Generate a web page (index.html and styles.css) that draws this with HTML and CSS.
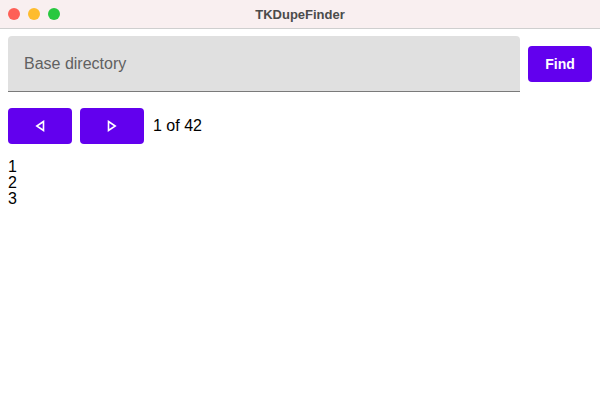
FILE: index.html
```html
<!DOCTYPE html>
<html>
<head>
<meta charset="utf-8">
<link rel="stylesheet" href="styles.css">
</head>
<body>
<div class="window">
  <div class="titlebar">
    <div class="lights">
      <span class="light red"></span>
      <span class="light yellow"></span>
      <span class="light green"></span>
    </div>
    <div class="title">TKDupeFinder</div>
  </div>
  <div class="content">
    <div class="search-row">
      <div class="field"><span class="placeholder">Base directory</span></div>
      <button class="btn find">Find</button>
    </div>
    <div class="nav-row">
      <button class="btn nav">
        <svg width="10" height="12" viewBox="0 0 10 12"><path d="M8.5 1.5 L1.8 6 L8.5 10.5 Z" fill="none" stroke="#fff" stroke-width="1.6" stroke-linejoin="miter"/></svg>
      </button>
      <button class="btn nav">
        <svg width="10" height="12" viewBox="0 0 10 12"><path d="M1.5 1.5 L8.2 6 L1.5 10.5 Z" fill="none" stroke="#fff" stroke-width="1.6" stroke-linejoin="miter"/></svg>
      </button>
      <span class="count">1 of 42</span>
    </div>
    <div class="list">
      <div>1</div>
      <div>2</div>
      <div>3</div>
    </div>
  </div>
</div>
</body>
</html>
```
FILE: styles.css
```css
html, body {
  margin: 0;
  padding: 0;
  background: #ffffff;
}
body {
  font-family: "Liberation Sans", Arial, sans-serif;
  color: #000;
  width: 600px;
  height: 400px;
  overflow: hidden;
}
.titlebar {
  height: 28px;
  background: #f9eff0;
  border-bottom: 1px solid #cfcfcf;
  display: flex;
  align-items: center;
  justify-content: center;
  position: relative;
}
.lights {
  position: absolute;
  left: 8px;
  top: 8px;
  display: flex;
  gap: 8px;
}
.light {
  width: 12px;
  height: 12px;
  border-radius: 50%;
  display: block;
}
.red { background: #fe5f57; }
.yellow { background: #febc2e; }
.green { background: #28c840; }
.title {
  font-size: 13px;
  font-weight: bold;
  color: #4b4b4b;
}
.content {
  padding: 7px 8px 0 8px;
}
.search-row {
  display: flex;
  align-items: center;
  gap: 8px;
}
.field {
  height: 55px;
  background: #e0e0e0;
  border-bottom: 1px solid #7a7a7a;
  border-radius: 4px 4px 0 0;
  display: flex;
  align-items: center;
  padding-left: 16px;
  box-sizing: content-box;
  width: 496px;
  flex: 0 0 496px;
}
.placeholder {
  font-size: 16px;
  color: #616161;
}
.btn {
  border: none;
  background: #6200ee;
  color: #fff;
  border-radius: 4px;
  width: 64px;
  height: 36px;
  padding: 0;
  display: flex;
  align-items: center;
  justify-content: center;
  font-family: "Liberation Sans", Arial, sans-serif;
}
.find {
  font-size: 14px;
  font-weight: bold;
}
.nav-row {
  margin-top: 16px;
  display: flex;
  align-items: center;
  gap: 8px;
}
.count {
  font-size: 16px;
  margin-left: 1px;
}
.list {
  margin-top: 15px;
  font-size: 16px;
  line-height: 16px;
}
```
